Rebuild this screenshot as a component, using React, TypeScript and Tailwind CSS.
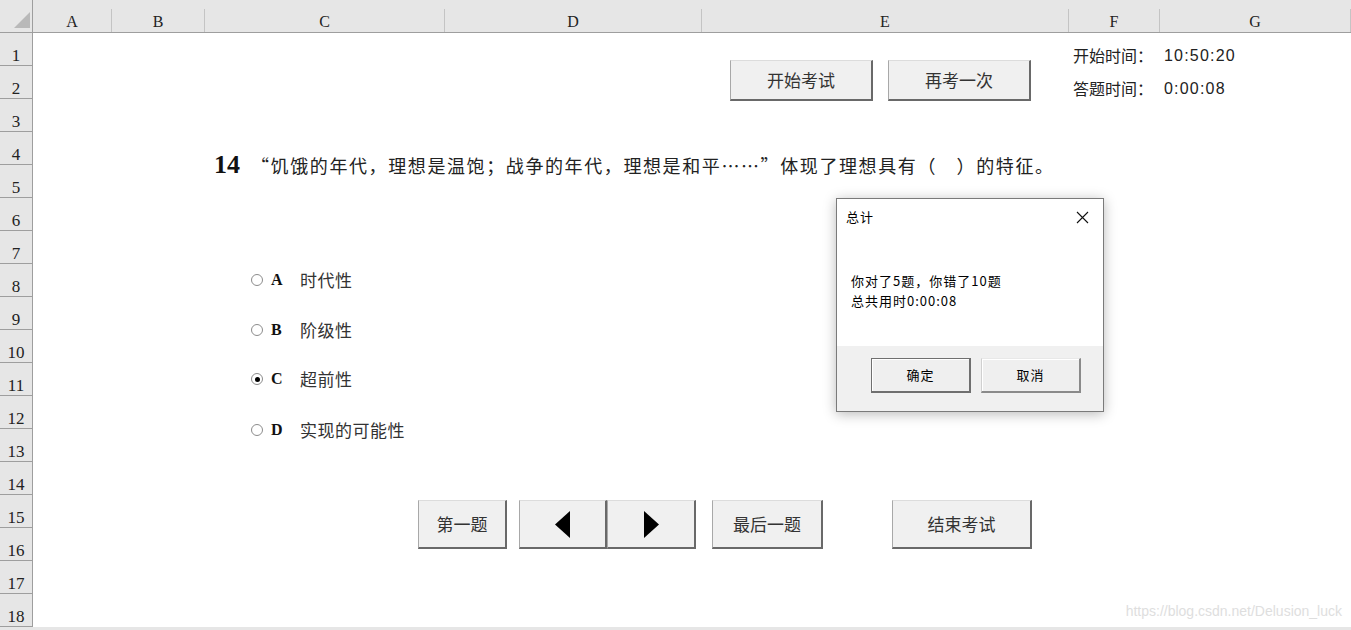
import React from 'react';

const CJK = "font-['Noto_Sans_CJK_SC',sans-serif]";
const SERIF = "font-['Liberation_Serif','Noto_Sans_CJK_SC',serif]";

// column widths taken from the sheet header
const columns = [
  { name: 'A', w: 'w-[79px]' },
  { name: 'B', w: 'w-[93px]' },
  { name: 'C', w: 'w-[240px]' },
  { name: 'D', w: 'w-[257px]' },
  { name: 'E', w: 'w-[367px]' },
  { name: 'F', w: 'w-[91px]' },
  { name: 'G', w: 'w-[191px]' },
];

const rows = Array.from({ length: 18 }, (_, i) => i + 1);

const options = [
  { key: 'A', text: '时代性', top: 'top-[270px]', checked: false },
  { key: 'B', text: '阶级性', top: 'top-[320px]', checked: false },
  { key: 'C', text: '超前性', top: 'top-[369px]', checked: true },
  { key: 'D', text: '实现的可能性', top: 'top-[420px]', checked: false },
];

const sheetBtn =
  'flex items-center justify-center bg-[#f0f0f0] border-t border-l border-t-[#dcdcdc] border-l-[#a8a8a8] border-r-2 border-b-2 border-r-[#696969] border-b-[#696969] text-[17px] text-[#333]';

const dlgBtn = 'w-[100px] h-[35px] bg-[#efefef] shadow-[inset_1px_1px_0_#fff] text-[13px] tracking-[1px] text-black';

function Cell({ w, children }: { w: string; children?: React.ReactNode }) {
  return <div className={`${w} h-full shrink-0 flex items-end pb-[3px] pl-[4px]`}>{children}</div>;
}

export default function App() {
  return (
    <div className={`relative w-[1351px] h-[630px] overflow-hidden bg-white ${CJK}`}>
      {/* column header */}
      <div className="flex h-[33px] bg-[#e6e6e6] border-b border-[#9e9e9e]">
        <div className="relative w-[33px] shrink-0 border-r border-[#9e9e9e]">
          <svg className="absolute left-[14px] top-[12px]" width="17" height="17" viewBox="0 0 17 17">
            <polygon points="0,16 16,16 16,0" fill="#b9b9b9" />
          </svg>
        </div>
        {columns.map((c) => (
          <div key={c.name} className={`${c.w} shrink-0 pt-[9px]`}>
            <div className={`h-[23px] border-r border-[#c4c4c4] flex items-center justify-center pt-[2px] text-[16px] text-[#222] ${SERIF}`}>
              {c.name}
            </div>
          </div>
        ))}
      </div>

      {/* rows */}
      {rows.map((r) => (
        <div key={r} className="flex h-[33px]">
          <div
            className={`w-[33px] shrink-0 bg-[#e6e6e6] border-r border-b border-[#9e9e9e] flex items-end justify-center pb-[1px] leading-none text-[17px] text-[#222] ${SERIF}`}
          >
            {r}
          </div>
          {r === 1 || r === 2 ? (
            <>
              <Cell w="w-[1036px]" />
              <Cell w="w-[91px]">
                <span className="text-[16px] text-[#222] leading-none">{r === 1 ? '开始时间：' : '答题时间：'}</span>
              </Cell>
              <Cell w="w-[191px]">
                <span className="text-[16px] text-[#222] leading-none tracking-[1.2px] mb-[-1px] font-['Liberation_Sans',sans-serif]">
                  {r === 1 ? '10:50:20' : '0:00:08'}
                </span>
              </Cell>
            </>
          ) : null}
        </div>
      ))}
      <div className="h-[3px] bg-[#e6e6e6]" />

      {/* shapes on the sheet */}
      <button className={`absolute left-[730px] top-[60px] w-[143px] h-[41px] ${sheetBtn}`}>开始考试</button>
      <button className={`absolute left-[888px] top-[60px] w-[143px] h-[41px] ${sheetBtn}`}>再考一次</button>

      <div className="absolute left-[214px] top-[145px] flex items-baseline">
        <span className={`w-[37px] text-[26px] font-bold text-[#111] ${SERIF}`}>14</span>
        <span className="text-[18px] text-[#222] tracking-[1.6px]">
          “饥饿的年代，理想是温饱；战争的年代，理想是和平……”体现了理想具有（　）的特征。
        </span>
      </div>

      {options.map((o) => (
        <div key={o.key} className={`absolute left-[251px] ${o.top} h-[20px] flex items-center`}>
          <span className="w-[12px] h-[12px] rounded-full border border-[#8c8c8c] bg-white flex items-center justify-center">
            {o.checked && <span className="w-[5px] h-[5px] rounded-full bg-black" />}
          </span>
          <span className={`ml-[8px] w-[29px] text-[16px] font-bold text-[#111] ${SERIF}`}>{o.key}</span>
          <span className="text-[17px] text-[#333] tracking-[0.5px]">{o.text}</span>
        </div>
      ))}

      <button className={`absolute left-[418px] top-[500px] w-[89px] h-[49px] ${sheetBtn}`}>第一题</button>
      <button className={`absolute left-[519px] top-[500px] w-[88px] h-[49px] ${sheetBtn}`}>
        <svg width="15" height="27" viewBox="0 0 15 27">
          <polygon points="15,0 15,27 0,13.5" fill="#000" />
        </svg>
      </button>
      <button className={`absolute left-[607px] top-[500px] w-[89px] h-[49px] ${sheetBtn}`}>
        <svg width="15" height="27" viewBox="0 0 15 27">
          <polygon points="0,0 0,27 15,13.5" fill="#000" />
        </svg>
      </button>
      <button className={`absolute left-[712px] top-[500px] w-[111px] h-[49px] ${sheetBtn}`}>最后一题</button>
      <button className={`absolute left-[892px] top-[500px] w-[140px] h-[49px] ${sheetBtn}`}>结束考试</button>

      {/* message box */}
      <div className="absolute left-[836px] top-[198px] w-[268px] h-[214px] flex flex-col border border-[#7a7a7a] bg-white shadow-[0_2px_12px_rgba(0,0,0,0.28)]">
        <div className="h-[36px] flex items-center justify-between pl-[9px] pr-[14px]">
          <span className="text-[13px] tracking-[1px] text-black">总计</span>
          <svg width="13" height="13" viewBox="0 0 13 13">
            <path d="M1 1 L12 12 M12 1 L1 12" stroke="#111" strokeWidth="1.1" />
          </svg>
        </div>
        <div className="flex-1 pl-[14px] pt-[36px] text-[13px] tracking-[1px] leading-[20px] text-black">
          <div>你对了5题，你错了10题</div>
          <div>总共用时0:00:08</div>
        </div>
        <div className="h-[65px] bg-[#f0f0f0] flex items-start pt-[12px] pl-[34px] gap-[10px]">
          <button className={`${dlgBtn} border border-[#6f6f6f] border-r-2 border-b-2`}>确定</button>
          <button
            className={`${dlgBtn} border-t border-l border-t-[#e8e8e8] border-l-[#d0d0d0] border-r-2 border-b-2 border-r-[#8a8a8a] border-b-[#8a8a8a]`}
          >
            取消
          </button>
        </div>
      </div>

      <div className="absolute right-[9px] top-[601px] text-[14px] text-[#dedede] font-['Liberation_Sans',sans-serif]">
        https://blog.csdn.net/Delusion_luck
      </div>
    </div>
  );
}
